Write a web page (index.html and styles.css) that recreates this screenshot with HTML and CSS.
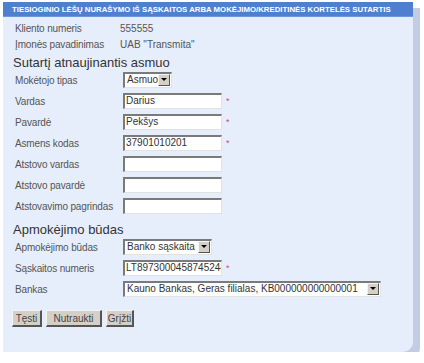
FILE: index.html
```html
<!DOCTYPE html>
<html lang="lt">
<head>
<meta charset="utf-8">
<title>Sutartis</title>
<link rel="stylesheet" href="styles.css">
</head>
<body>
<div class="page">
  <div class="panel">
    <div class="title">TIESIOGINIO LĖŠŲ NURAŠYMO IŠ SĄSKAITOS ARBA MOKĖJIMO/KREDITINĖS KORTELĖS SUTARTIS</div>
    <div class="body">
      <div class="info">
        <span class="lbl">Kliento numeris</span><span class="val">555555</span>
        <span class="lbl">Įmonės pavadinimas</span><span class="val">UAB "Transmita"</span>
      </div>

      <h2 class="section first">Sutartį atnaujinantis asmuo</h2>
      <div class="form">
        <span class="lbl">Mokėtojo tipas</span>
        <div class="field"><span class="select w48"><span class="sel-text">Asmuo</span><span class="arrow"></span></span></div>

        <span class="lbl">Vardas</span>
        <div class="field"><span class="input">Darius</span><span class="req">*</span></div>

        <span class="lbl">Pavardė</span>
        <div class="field"><span class="input">Pekšys</span><span class="req">*</span></div>

        <span class="lbl">Asmens kodas</span>
        <div class="field"><span class="input">37901010201</span><span class="req">*</span></div>

        <span class="lbl">Atstovo vardas</span>
        <div class="field"><span class="input"></span></div>

        <span class="lbl">Atstovo pavardė</span>
        <div class="field"><span class="input"></span></div>

        <span class="lbl">Atstovavimo pagrindas</span>
        <div class="field"><span class="input"></span></div>
      </div>

      <h2 class="section second">Apmokėjimo būdas</h2>
      <div class="form">
        <span class="lbl">Apmokėjimo būdas</span>
        <div class="field"><span class="select w88"><span class="sel-text">Banko sąskaita</span><span class="arrow"></span></span></div>

        <span class="lbl">Sąskaitos numeris</span>
        <div class="field"><span class="input">LT8973000458745244</span><span class="req">*</span></div>

        <span class="lbl">Bankas</span>
        <div class="field"><span class="select w257"><span class="sel-text">Kauno Bankas, Geras filialas, KB000000000000001</span><span class="arrow"></span></span></div>
      </div>

      <div class="buttons">
        <button class="btn b1">Tęsti</button>
        <button class="btn b2">Nutraukti</button>
        <button class="btn b3">Grįžti</button>
      </div>
    </div>
  </div>
</div>
</body>
</html>
```

FILE: styles.css
```css
* { box-sizing: border-box; }
html, body { margin: 0; padding: 0; background: #ffffff; }
body {
  font-family: "Liberation Sans", Arial, sans-serif;
  font-size: 10px;
  color: #4d4d4d;
}
.page {
  padding: 2px 0 0 3px;
}
.panel {
  width: 410px;
  height: 350px;
  background: #e7eefb;
  border-radius: 0 0 10px 0;
  box-shadow: 7px 6px 0 #c2cde4;
}
.title {
  height: 15px;
  line-height: 15px;
  background: #4f80cf;
  border-bottom: 1px solid #6d97da;
  color: #ffffff;
  font-weight: bold;
  font-size: 7.8px;
  padding-left: 9px;
  white-space: nowrap;
}
.body {
  padding: 3px 0 0 12px;
}
.info {
  display: grid;
  grid-template-columns: 105px auto;
  grid-auto-rows: 16px;
  align-items: center;
}
.lbl { color: #555555; white-space: nowrap; letter-spacing: -0.15px; }
.val { color: #555555; white-space: nowrap; }
.section {
  margin: 0 0 1px -2px;
  height: 16px;
  line-height: 16px;
  font-size: 13px;
  font-weight: normal;
  color: #333333;
}
.section.first { margin-top: 3px; }
.section.second { margin-top: 8px; }
.form {
  display: grid;
  grid-template-columns: 108px auto;
  grid-auto-rows: 16px;
  row-gap: 5px;
  align-items: center;
}
.field {
  display: flex;
  align-items: center;
  height: 16px;
}
.input {
  display: block;
  width: 99px;
  height: 16px;
  background: #ffffff;
  border-style: solid;
  border-width: 2px 1px 1px 2px;
  border-color: #7a7a7a #e2e2e2 #e2e2e2 #7a7a7a;
  font-size: 10px;
  line-height: 12px;
  padding-left: 1px;
  color: #333;
  white-space: nowrap;
  overflow: hidden;
}
.req {
  color: #d2477a;
  font-size: 9px;
  margin-left: 4px;
  line-height: 16px;
}
.select {
  display: flex;
  height: 16px;
  background: #ffffff;
  border-style: solid;
  border-width: 2px 1px 1px 2px;
  border-color: #7a7a7a #e2e2e2 #e2e2e2 #7a7a7a;
}
.select.w48 { width: 49px; }
.select.w88 { width: 89px; }
.select.w257 { width: 258px; }
.sel-text {
  flex: 1;
  font-size: 10px;
  line-height: 12px;
  padding-left: 2px;
  color: #333;
  white-space: nowrap;
  overflow: hidden;
}
.arrow {
  flex: none;
  width: 12px;
  height: 12px;
  margin: 0 1px 0 0;
  background: #d4d0c8;
  border-style: solid;
  border-width: 1px;
  border-color: #f4f4f4 #555 #555 #f4f4f4;
  position: relative;
}
.arrow::after {
  content: "";
  position: absolute;
  left: 2px;
  top: 3px;
  border-left: 3px solid transparent;
  border-right: 3px solid transparent;
  border-top: 3px solid #000;
}
.buttons {
  display: flex;
  gap: 4px;
  margin-top: 13px;
  margin-left: -3px;
}
.btn {
  height: 17px;
  padding: 0;
  background: #d4d0c8;
  border-style: solid;
  border-width: 1px 2px 2px 1px;
  border-color: #f4f4f4 #555 #555 #f4f4f4;
  font-family: "Liberation Sans", Arial, sans-serif;
  font-size: 10px;
  color: #444;
  line-height: 13px;
  text-align: center;
}
.b1 { width: 30px; }
.b2 { width: 56px; }
.b3 { width: 28px; }
```
